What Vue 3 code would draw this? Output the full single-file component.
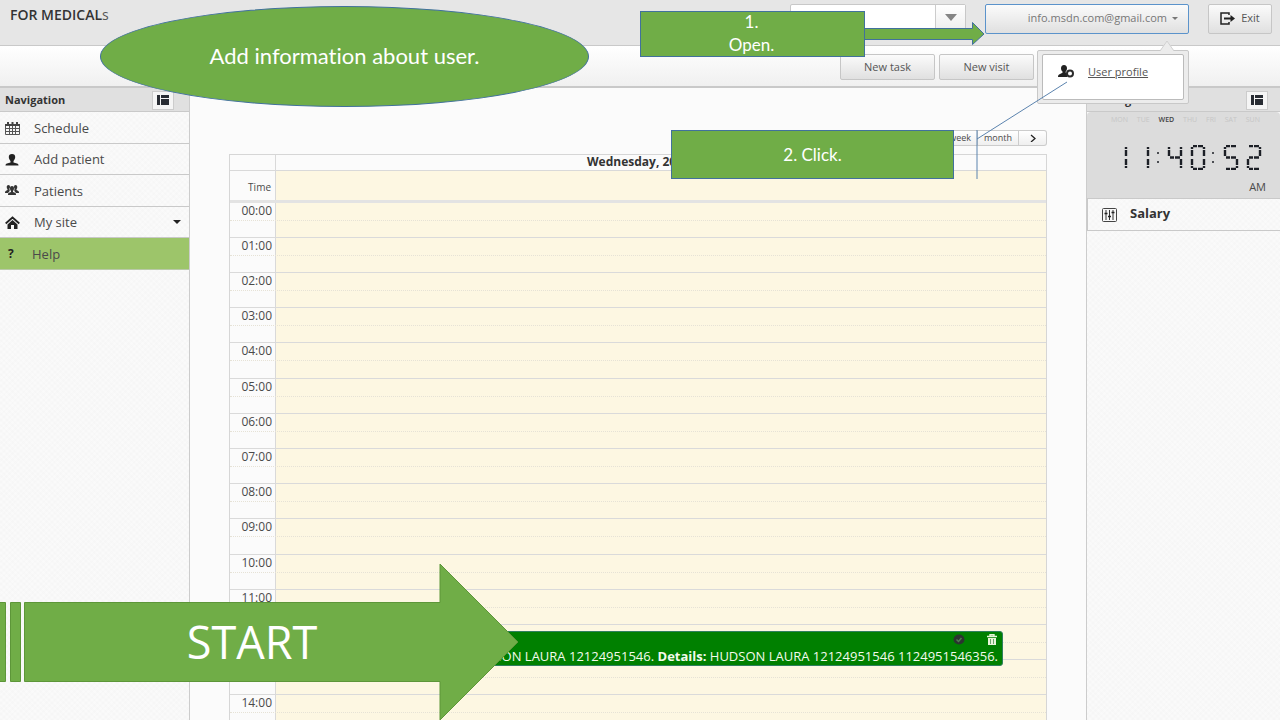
<script setup>
const nav = [
  { label: 'Schedule', icon: 'calendar' },
  { label: 'Add patient', icon: 'user' },
  { label: 'Patients', icon: 'users' },
  { label: 'My site', icon: 'home', caret: true },
  { label: 'Help', icon: 'help', active: true }
]
const days = ['MON', 'TUE', 'WED', 'THU', 'FRI', 'SAT', 'SUN']
// The slots under the start banner carry no label.
const unlabeled = [12, 13]
const hours = Array.from({ length: 15 }, (_, i) => ({
  id: i,
  label: unlabeled.includes(i) ? '' : String(i).padStart(2, '0') + ':00'
}))

const shapes = { 0: 'abcdef', 1: 'bc', 2: 'abged', 4: 'fgbc', 5: 'afgcd' }
const segs = {
  a: 'M3 1h4M8 1h5',
  d: 'M3 24h4M8 24h5',
  g: 'M3 12.5h4M8 12.5h5',
  f: 'M2 2v2M2 5v6',
  e: 'M2 14v6M2 21v2',
  b: 'M14 2v2M14 5v6',
  c: 'M14 14v6M14 21v2'
}
const digits = [[0, 1], [22, 1], [55, 4], [78, 0], [111, 5], [134, 2]].map(([x, n]) => ({
  x, d: shapes[n].split('').map(s => segs[s]).join('')
}))
</script>

<template>
  <div class="app">
    <header class="top">
      <h1 class="brand">FOR MEDICAL<span>s</span></h1>
      <div class="combo">
        <input type="text" aria-label="Search" />
        <button type="button" aria-label="Show list"><svg width="12" height="8" viewBox="0 0 12 8"><path d="M0 1h12L6 8z" fill="#858585" /></svg></button>
      </div>
      <button class="btn account" type="button">info.msdn.com@gmail.com
        <svg width="6" height="3" viewBox="0 0 6 3"><path d="M0 0h6L3 3z" fill="#777" /></svg>
      </button>
      <button class="btn exit" type="button">
        <svg width="15" height="13" viewBox="0 0 15 13" fill="none" stroke="#222"><path d="M9 3V1H1v11h8v-2" stroke-width="1.5" /><path d="M4 6.5h8" stroke-width="2" /><path d="M10.500 3l4.500 3.500-4.500 3.500z" fill="#222" stroke="none" /></svg>
        Exit
      </button>
    </header>
    <div class="toolbar">
      <button class="btn" type="button">New task</button>
      <button class="btn" type="button">New visit</button>
    </div>

    <div class="body">
      <nav class="side">
        <div class="panel-head">
          <h2>Navigation</h2>
          <button class="toggle" type="button" aria-label="Toggle navigation"><svg width="12" height="10" viewBox="0 0 12 10"><path d="M0 0h3v10H0zM4 0h8v3H4zM4 4h8v6H4z" fill="#282c33" /></svg></button>
        </div>
        <a v-for="n in nav" :key="n.label" href="#" class="item" :class="{ active: n.active }">
          <span class="ico">
            <svg v-if="n.icon === 'calendar'" width="16" height="14" viewBox="0 0 16 14"><path d="M.5 3.500h14v10H.5zM.5 7.500h14M.5 10.500h14M4.500 5v8M7.500 5v8M10.500 5v8" fill="none" stroke="#555" /><path d="M0 3h15v2H0zM2 1h2v3H2zM6.500 1h2v3h-2zM11 1h2v3h-2z" fill="#444" /></svg>
            <svg v-else-if="n.icon === 'user'" width="14" height="13" viewBox="0 0 14 13"><path d="M7 1c2.200 0 3.200 1.300 3.200 3.100S9.200 7.300 8.500 8v1.400l3.500 1.100c1 .4 1.500 1 1.500 2.100H.5c0-1.100.5-1.700 1.500-2.100l3.500-1.100V8C4.800 7.300 3.800 5.900 3.800 4.100S4.800 1 7 1z" fill="#222" /></svg>
            <svg v-else-if="n.icon === 'users'" width="14" height="11" viewBox="0 0 14 11" fill="#333"><path d="M3.500 0C4.500 0 5 .7 5 2c0 1-.5 1.500-.7 2 .5.600.7 1.500 0 2.500L3 8H0c0-1.500.3-2 1.500-2.500l1-.5V4.300C2 3.700 1.700 3 1.700 2c0-1.300.8-2 1.800-2zM10.500 0C9.500 0 9 .7 9 2c0 1 .5 1.500.7 2-.5.600-.7 1.500 0 2.500L11 8h3c0-1.500-.3-2-1.500-2.500l-1-.5v-.7c.5-.6.8-1.300.8-2.300 0-1.300-.8-2-1.800-2z" /><path d="M7 1c1.300 0 2 .8 2 2.400 0 1.200-.5 2-1 2.500V7l2 .8c.8.300 1 1 1 2.200H3c0-1.200.2-1.900 1-2.200L6 7V5.900c-.5-.5-1-1.300-1-2.500C5 1.800 5.700 1 7 1z" /></svg>
            <svg v-else-if="n.icon === 'home'" width="15" height="13" viewBox="0 0 15 13"><path d="M.7 7.500l6.800-6 6.800 6" fill="none" stroke="#222" stroke-width="1.800" /><path d="M2.500 8.500l5-4.500 5 4.500V13H9V9H6v4H2.500z" fill="#222" /></svg>
            <b v-else>?</b>
          </span>
          <span>{{ n.label }}</span>
          <svg v-if="n.caret" class="caret" width="8" height="4" viewBox="0 0 8 4"><path d="M0 0h8L4 4z" fill="#222" /></svg>
        </a>
      </nav>

      <main class="main">
        <div class="views">
          <button type="button">day</button><button type="button">week</button><button type="button">month</button><button type="button" aria-label="Next"><svg width="6" height="8" viewBox="0 0 6 8"><path d="M1 1L5 4.500L1 8" fill="none" stroke="#222" stroke-width="1.300" /></svg></button>
        </div>
        <section class="cal">
          <div class="row date"><div class="time"></div><div class="cell">Wednesday, 20</div></div>
          <div class="row allday"><div class="time">Time</div><div class="cell"></div></div>
          <div class="grid">
            <div v-for="h in hours" :key="h.id" class="row hour"><div class="time">{{ h.label }}</div><div class="cell"></div></div>
            <article class="event">
              <div class="event-icons">
                <button type="button" aria-label="Done"><svg width="12" height="11" viewBox="0 0 12 11"><ellipse cx="6" cy="5.500" rx="5.500" ry="5" fill="#2b3330" /><path d="M3.500 5.500l2 2 3-3.500" fill="none" stroke="#4d7a50" stroke-width="1.500" /></svg></button>
                <button type="button" aria-label="Delete"><svg width="10" height="11" viewBox="0 0 10 11"><path d="M3 2V.8h4V2M0 2.500h10" fill="none" stroke="#e8f5d8" stroke-width="1.400" /><path d="M1 4h8v7H1z" fill="#e8f5d8" /><path d="M3.500 5v5M6.500 5v5" stroke="#6aa56a" /></svg></button>
              </div>
              <p>HUDSON LAURA 12124951546. <b>Details:</b> HUDSON LAURA 12124951546 1124951546356.</p>
            </article>
          </div>
        </section>
      </main>

      <aside class="right">
        <div class="panel-head">
          <h2>Widgets</h2>
          <button class="toggle" type="button" aria-label="Toggle widgets"><svg width="12" height="10" viewBox="0 0 12 10"><path d="M0 0h3v10H0zM4 0h8v3H4zM4 4h8v6H4z" fill="#282c33" /></svg></button>
        </div>
        <div class="clock">
          <div class="days"><span v-for="d in days" :key="d" :class="{ on: d === 'WED' }">{{ d }}</span></div>
          <svg class="digits" width="150" height="25" viewBox="0 0 150 25" role="img" aria-label="11:40:52">
            <g fill="none" stroke="#1c1f26" stroke-width="2">
              <path v-for="g in digits" :key="g.x" :d="g.d" :transform="`translate(${g.x} 0)`" stroke-width="2.400" />
              <path d="M46 7v2M46 16v2M101 7v2M101 16v2" stroke-width="1.500" />
            </g>
          </svg>
          <div class="ampm">AM</div>
        </div>
        <a href="#" class="salary">
          <svg width="15" height="14" viewBox="0 0 15 14" fill="none" stroke="#444"><rect x=".5" y=".5" width="14" height="13" rx="1" /><path d="M4 2v10M7.500 2v10M11 2v10" stroke="#333" /><path d="M2.500 5.500h3M6 8.500h3M9.500 4.500h3" stroke="#222" stroke-width="1.500" /></svg>
          <span>Salary</span>
        </a>
      </aside>
    </div>

    <div class="popover">
      <svg class="tip" width="14" height="11" viewBox="0 0 14 11"><path d="M0 11L7 0l7 11z" fill="#ececec" /><path d="M0 11L7 1l7 10" fill="none" stroke="#d0d0d0" /></svg>
      <div class="popbox">
        <svg width="16" height="13" viewBox="0 0 16 13"><path d="M6 0c2 0 3 1.300 3 3.200 0 1.500-.7 2.600-1.300 3.300v1.300L9 8.500V12H0c0-1.500.4-2.300 1.500-2.700l3-1.500V6.500C3.700 5.800 3 4.700 3 3.200 3 1.300 4 0 6 0z" fill="#222" /><circle cx="12" cy="8.500" r="3" fill="#fff" stroke="#2c2c2c" stroke-width="2" /></svg>
        <a href="#">User profile</a>
      </div>
    </div>

    <div class="note oval">Add information about user.</div>
    <svg class="note-arrow" width="122" height="26" viewBox="0 0 122 26"><path d="M0 7.500H109.500V1.500L121 13L109.500 23.500V18.500H0z" fill="#70ad47" stroke="#41719c" /></svg>
    <div class="note open">1.<br />Open.</div>
    <div class="note click">2. Click.</div>
    <svg class="connector" width="92" height="100" viewBox="0 0 92 100" fill="none" stroke="#5b83ae"><path d="M1 49V98M1 58L91 1" /></svg>
    <div class="start">
      <svg width="520" height="160" viewBox="0 0 520 160" fill="#70ad47" stroke="#5d9639"><path d="M-2 40.500H5.500V119.500H-2zM10.500 40.500H20.500V119.500H10.500zM24.500 40.500H440V2L518 80L440 158V119.500H24.500z" /></svg>
      <span>START</span>
    </div>
  </div>
</template>

<style>
html, body { background: #fbfbfb; }
</style>

<style scoped>
* { box-sizing: border-box; }
.app {
  position: relative;
  display: flex;
  flex-direction: column;
  height: 100vh;
  overflow: hidden;
  background: #fbfbfb;
  color: #4a4a4a;
  font: 13px/16px "Open Sans", "Noto Sans", sans-serif;
}
h1, h2, p { margin: 0; }
button, input { font: inherit; color: inherit; margin: 0; padding: 0; border: 0; background: none; }
a { color: inherit; text-decoration: none; }
svg { display: block; flex: none; }

.top {
  display: flex;
  align-items: flex-start;
  height: 46px;
  flex: none;
  padding: 4px 8px 0 10px;
  background: #e6e6e6;
  border-bottom: 1px solid #c9c9c9;
}
.brand { flex: 1; padding-top: 3px; font-size: 14px; line-height: 16px; font-weight: 600; color: #333; }
.brand span { font-weight: 400; color: #555; }
.combo { display: flex; width: 176px; height: 26px; margin-right: 19px; border: 1px solid #c8c8c8; border-radius: 2px; background: #fff; }
.combo input { flex: 1; min-width: 0; }
.combo button { width: 30px; display: grid; place-items: center; border-left: 1px solid #ccc; background: linear-gradient(#fff, #efefef); }
.btn {
  display: flex;
  align-items: center;
  justify-content: center;
  border: 1px solid #c6c6c6;
  border-radius: 2px;
  background: linear-gradient(#fbfbfb, #e0e0e0);
  font-size: 11px;
  line-height: 14px;
  color: #555;
}
.account { width: 204px; height: 30px; margin-right: 19px; padding: 0 10px 2px 0; gap: 5px; justify-content: flex-end; border-color: #5b93cb; color: #777; }
.exit { width: 64px; height: 30px; padding-bottom: 2px; gap: 6px; }

.toolbar {
  display: flex;
  justify-content: flex-end;
  align-items: center;
  gap: 4px;
  flex: none;
  height: 42px;
  padding: 2px 246px 0 0;
  border-bottom: 2px solid #c9c9c9;
  background: linear-gradient(#fff, #f0f0f0);
}
.toolbar .btn { width: 95px; height: 26px; }

.body { display: flex; flex: 1; min-height: 0; }
.side, .right {
  flex: none;
  background:
    repeating-linear-gradient(45deg, rgba(0, 0, 0, 0.008) 0 2px, transparent 2px 4px),
    repeating-linear-gradient(-45deg, rgba(0, 0, 0, 0.008) 0 2px, transparent 2px 4px),
    #fafafa;
}
.side { width: 190px; border-right: 1px solid #ccc; }
.right { width: 194px; border-left: 1px solid #ccc; }
.panel-head {
  display: flex;
  align-items: center;
  justify-content: space-between;
  height: 24px;
  padding: 1px 15px 0 5px;
  background: #e0e0e0;
  border-bottom: 1px solid #c9c9c9;
}
.panel-head h2 { font-size: 11px; line-height: 16px; font-weight: 700; color: #333; }
.right .panel-head { padding: 1px 12px 0 17px; }
.toggle { display: grid; place-items: center; width: 22px; height: 19px; background: #f5f5f5; border: 1px solid #ccc; }
.item { display: flex; align-items: center; height: 32px; padding-right: 8px; border-bottom: 1px solid #c9c9c9; }
.item:nth-child(odd) { height: 31px; }
.ico { width: 34px; padding-left: 5px; }
.item b { padding-left: 3px; font-size: 12px; color: #222; }
.caret { margin-left: auto; }
.active { background: #9dc56a; border-bottom-color: #b9c9a8; }
.active .ico { width: 32px; }

.main { flex: 1; min-width: 0; padding: 42px 39px 0; }
.views { display: flex; justify-content: flex-end; height: 16px; }
.views button {
  height: 16px;
  min-width: 28px;
  padding: 0 6px;
  display: grid;
  place-items: center;
  border: 1px solid #ccc;
  border-left-width: 0;
  background: linear-gradient(#fff, #efefef);
  font-size: 9px;
  line-height: 12px;
}
.views button:first-child { border-left-width: 1px; }
.views button:last-child { border-radius: 0 3px 3px 0; }
.cal { margin-top: 8px; border: 1px solid #d6d6d6; border-bottom: 0; }
.row { display: flex; }
.time { flex: none; width: 46px; padding-right: 3px; border-right: 1px solid #d9d9d9; text-align: right; }
.cell { flex: 1; background: #fdf7e2; }
.date { height: 16px; border-bottom: 1px solid #d9d9d9; }
.date .cell { background: none; padding-left: 311px; font-size: 12px; line-height: 14px; font-weight: 700; color: #333; }
.allday { height: 32px; border-bottom: 3px solid #e3e3e3; font-size: 10px; line-height: 32px; }
.allday .time { padding-right: 4px; }
.grid { position: relative; }
.hour { position: relative; height: 35px; border-bottom: 1px solid #dadada; font-size: 12px; line-height: 16px; }
.hour:nth-child(5n) { height: 36px; }
.hour::after { content: ""; position: absolute; left: 0; right: 0; top: 17px; border-top: 1px dotted #e6e2d6; }
.event {
  position: absolute;
  left: 46px;
  right: 43px;
  top: 428px;
  height: 35px;
  overflow: hidden;
  border: 1px solid #2f7f5f;
  border-radius: 3px;
  background: #008000;
  color: #f4faec;
  font-size: 13px;
  line-height: 18px;
  padding: 2px 4px 0;
  text-align: right;
  white-space: nowrap;
}
.event-icons { display: flex; align-items: flex-start; justify-content: flex-end; gap: 22px; height: 13px; padding-right: 1px; }

.clock { height: 87px; padding: 2px 14px 0; background: #dcdcdc; border-bottom: 1px solid #c9c9c9; border-radius: 4px 4px 0 0; }
.days { display: flex; justify-content: space-between; padding: 0 6px 0 10px; font-size: 7px; line-height: 12px; color: #c6c6c6; }
.days .on { color: #444; font-weight: 600; }
.digits { margin: 19px 4px 0 11px; }
.ampm { margin-top: 9px; text-align: right; font-size: 11px; line-height: 16px; }
.salary { display: flex; align-items: center; gap: 13px; height: 32px; padding-left: 14px; border: 1px solid #c9c9c9; border-width: 0 0 1px 1px; font-weight: 700; color: #333; }
.salary span { padding-bottom: 3px; }

.popover { position: absolute; right: 91px; top: 50px; width: 152px; padding: 3px 4px; background: #ececec; border: 1px solid #c8c8c8; border-radius: 2px; }
.tip { position: absolute; right: 14px; bottom: 100%; }
.popbox { display: flex; align-items: flex-start; gap: 14px; height: 46px; padding: 10px 0 0 15px; background: #fff; border: 1px solid #bbb; border-radius: 2px; }
.popbox a { margin-top: -1px; font-size: 11px; color: #555; text-decoration: underline; }

.note { position: absolute; display: grid; place-items: center; text-align: center; background: #70ad47; border: 1px solid #41719c; color: #fff; font: 17px/23px Lato, sans-serif; font-variant-ligatures: none; }
.oval { left: 100px; top: 6px; width: 489px; height: 101px; padding-bottom: 2px; border-radius: 50%; font-size: 22px; line-height: 28px; }
.open { left: 640px; top: 11px; width: 225px; height: 46px; padding: 0 2px 2px 0; align-content: center; }
.click { left: 671px; top: 130px; width: 283px; height: 49px; }
.note-arrow { position: absolute; left: 863px; top: 21px; }
.connector { position: absolute; left: 976px; top: 81px; }
.start { position: absolute; left: 0; top: 562px; }
.start span { position: absolute; left: 0; width: 504px; top: 50px; text-align: center; color: #fff; font-size: 45px; line-height: 60px; }
</style>
